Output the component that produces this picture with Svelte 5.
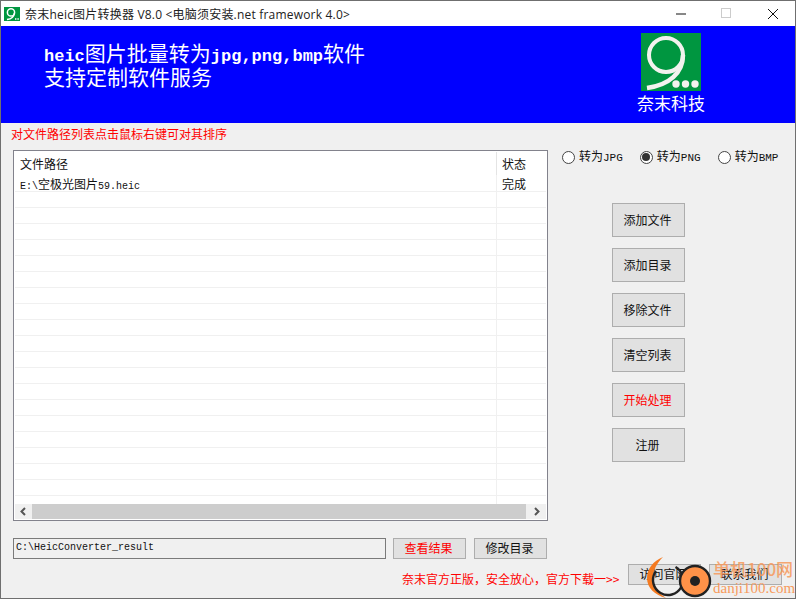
<script>
  const rows = Array.from({ length: 20 }, (_, i) => i);
  const sideButtons = [
    { label: "添加文件" },
    { label: "添加目录" },
    { label: "移除文件" },
    { label: "清空列表" },
    { label: "开始处理", red: true },
    { label: "注册" }
  ];
  const formats = ["JPG", "PNG", "BMP"];
  let format = "PNG";
</script>

<div class="window">
  <header class="titlebar">
    <svg class="app-icon" viewBox="0 0 16 14" width="16" height="14">
      <rect width="16" height="14" fill="#009640" />
      <circle cx="7" cy="5.4" r="3.6" fill="none" stroke="#fff" stroke-width="1.5" />
      <path d="M10.4 6 C10 10 7 12 3 12.6" fill="none" stroke="#fff" stroke-width="1.5" />
      <path d="M11 12h4" stroke="#fff" stroke-width="1.4" stroke-dasharray="1 .6" />
    </svg>
    <span class="title">奈末heic图片转换器 V8.0 &lt;电脑须安装.net framework 4.0&gt;</span>
    <div class="win-controls">
      <svg width="12" height="12" viewBox="0 0 12 12"><path d="M1 6h10" stroke="#111" /></svg>
      <svg width="12" height="12" viewBox="0 0 12 12"><rect x=".5" y=".5" width="9" height="9" fill="none" stroke="#ccc" /></svg>
      <svg width="12" height="12" viewBox="0 0 12 12"><path d="M1 1l10 10M11 1L1 11" stroke="#111" /></svg>
    </div>
  </header>

  <section class="banner">
    <div class="slogan">
      <div><b>heic</b>图片批量转为<b>jpg,png,bmp</b>软件</div>
      <div>支持定制软件服务</div>
    </div>
    <div class="brand">
      <svg viewBox="0 0 60 58" width="60" height="58">
        <rect width="60" height="58" fill="#009640" />
        <circle cx="25" cy="22" r="17" fill="none" stroke="#f2f2ee" stroke-width="4" />
        <path d="M42 22 C42 40 28 52 6 55" fill="none" stroke="#f2f2ee" stroke-width="4.5" />
        <circle cx="35" cy="51" r="3.7" fill="#f2f2ee" />
        <circle cx="44.5" cy="51" r="3.7" fill="#f2f2ee" />
        <circle cx="54" cy="51" r="3.7" fill="#f2f2ee" />
      </svg>
      <span>奈末科技</span>
    </div>
  </section>

  <main class="content">
    <p class="hint">对文件路径列表点击鼠标右键可对其排序</p>

    <div class="workarea">
      <div class="list">
        <div class="list-head">
          <span class="col-path">文件路径</span>
          <span class="col-state">状态</span>
        </div>
        <div class="list-row first">
          <span class="col-path"><span class="mono">E:\</span>空极光图片<span class="mono">59.heic</span></span>
          <span class="col-state">完成</span>
        </div>
        {#each rows as r (r)}
          <div class="list-row">
            <span class="col-path"></span>
            <span class="col-state"></span>
          </div>
        {/each}
        <div class="scrollbar">
          <svg width="17" height="15" viewBox="0 0 17 15"><path d="M10 4L6.5 7.5 10 11" fill="none" stroke="#555" stroke-width="2" /></svg>
          <div class="track"></div>
          <svg width="20" height="15" viewBox="0 0 20 15"><path d="M9 4l3.5 3.5L9 11" fill="none" stroke="#555" stroke-width="2" /></svg>
        </div>
      </div>

      <aside class="side">
        <div class="radios">
          {#each formats as f}
            <label class="radio">
              <span class="dot" class:on={format === f}></span>
              <span>转为<span class="mono wide">{f}</span></span>
            </label>
          {/each}
        </div>
        <div class="actions">
          {#each sideButtons as b}
            <button class="btn" class:red={b.red}>{b.label}</button>
          {/each}
        </div>
      </aside>
    </div>

    <div class="path-row">
      <div class="path-input mono">C:\HeicConverter_result</div>
      <button class="btn red">查看结果</button>
      <button class="btn">修改目录</button>
    </div>

    <div class="foot-row">
      <span class="promo">奈末官方正版，安全放心，官方下载一&gt;&gt;</span>
      <button class="btn small">访问官网</button>
      <button class="btn small">联系我们</button>
    </div>
  </main>

  <div class="watermark">
    <svg width="70" height="42" viewBox="0 0 70 42">
      <path d="M16 0 C6 4 0 12 0 21 C0 31 8 38 19 41 C11 36 6 29 6 21 C6 13 10 6 16 0Z" fill="#f47a20" />
      <circle cx="21" cy="23" r="15" fill="none" stroke="#222" stroke-width="2.4" stroke-dasharray="72 22" transform="rotate(-60 21 23)" />
      <circle cx="48" cy="24" r="15" fill="#ff9248" stroke="#222" stroke-width="2.4" />
      <circle cx="48" cy="24" r="5" fill="#222" />
    </svg>
    <div class="wm-text">
      <span class="wm-cn">单机100网</span>
      <span class="wm-en">danji100.com</span>
    </div>
  </div>
</div>

<style>
  :global(body) {
    margin: 0;
    overflow: hidden;
  }

  .window {
    position: relative;
    width: 796px;
    height: 599px;
    box-sizing: border-box;
    border: 1px solid #6f6f6f;
    background: #f0f0f0;
    font-family: "Noto Sans CJK SC", sans-serif;
    font-size: 12px;
    color: #111;
    overflow: hidden;
  }

  .titlebar {
    display: flex;
    align-items: center;
    height: 25px;
    background: #fff;
    padding-left: 3px;
  }

  .app-icon {
    margin-right: 5px;
  }

  .title {
    font-family: "Open Sans", "Noto Sans CJK SC", sans-serif;
    font-size: 12px;
    letter-spacing: 0.2px;
    color: #222;
    white-space: nowrap;
  }

  .win-controls {
    margin-left: auto;
    display: flex;
    gap: 34px;
    margin-right: 16px;
  }

  .banner {
    display: flex;
    justify-content: space-between;
    height: 97px;
    background: #0000ff;
    color: #fff;
  }

  .slogan {
    padding: 18px 0 0 43px;
    font-family: "Liberation Mono", "Noto Sans CJK SC", monospace;
    font-size: 21px;
    line-height: 23px;
  }

  .slogan b {
    font-size: 17px;
  }

  .brand {
    display: flex;
    flex-direction: column;
    align-items: center;
    width: 70px;
    margin: 7px 89px 0 0;
    font-size: 17px;
    line-height: 24px;
  }

  .content {
    display: flex;
    flex-direction: column;
    padding: 0 0 0 12px;
  }

  .hint {
    margin: 0;
    height: 27px;
    box-sizing: border-box;
    color: #ff0000;
    font-size: 12px;
    line-height: 21px;
    margin-left: -2px;
  }

  .workarea {
    display: flex;
  }

  .list {
    width: 535px;
    height: 371px;
    box-sizing: border-box;
    border: 1px solid #82828c;
    background: #fff;
    display: flex;
    flex-direction: column;
    overflow: hidden;
    position: relative;
    padding: 1px;
  }

  .list-head,
  .list-row {
    display: flex;
    flex: none;
  }

  .list-head {
    height: 23px;
    line-height: 24px;
  }

  .list-row {
    height: 16px;
    line-height: 18px;
    box-sizing: border-box;
    border-bottom: 1px solid #f0f0f0;
  }

  .list-row.first {
    height: 17px;
  }

  .col-path {
    width: 482px;
    padding-left: 5px;
    box-sizing: border-box;
    border-right: 1px solid #f0f0f0;
    white-space: nowrap;
  }

  .list-head .col-path {
    border-right-color: #e4e4e4;
  }

  .col-state {
    padding-left: 5px;
  }

  .mono {
    font-family: "Liberation Mono", "Noto Sans CJK SC", monospace;
    font-size: 10px;
  }

  .mono.wide {
    font-size: 11px;
  }

  .scrollbar {
    position: absolute;
    left: 1px;
    right: 1px;
    bottom: 1px;
    height: 15px;
    display: flex;
    align-items: center;
    background: #f0f0f0;
  }

  .scrollbar svg {
    flex: none;
  }

  .track {
    flex: 1;
    height: 15px;
    background: #cdcdcd;
  }

  .side {
    width: 236px;
  }

  .radios {
    display: flex;
    gap: 17px;
    padding: 0 0 0 14px;
    height: 53px;
  }

  .radio {
    display: flex;
    align-items: center;
    gap: 4px;
    height: 14px;
    font-size: 12px;
    line-height: 14px;
    white-space: nowrap;
  }

  .dot {
    width: 11px;
    height: 11px;
    border: 1px solid #444;
    border-radius: 50%;
    background: #fff;
    position: relative;
    flex: none;
  }

  .dot.on::after {
    content: "";
    position: absolute;
    inset: 1.5px;
    border-radius: 50%;
    background: #333;
  }

  .actions {
    display: flex;
    flex-direction: column;
    gap: 11px;
    padding-left: 64px;
    width: 74px;
  }

  .btn {
    width: 73px;
    height: 34px;
    box-sizing: border-box;
    border: 1px solid #adadad;
    background: #e1e1e1;
    color: #111;
    font-family: inherit;
    font-size: 12px;
    padding: 0 2px 2px 0;
    border-radius: 0;
    flex: none;
  }

  .btn.red {
    color: #ff0000;
  }

  .path-row {
    display: flex;
    align-items: center;
    height: 21px;
    margin-top: 17px;
  }

  .path-row .btn {
    height: 21px;
    margin-left: 8px;
  }

  .path-row .btn:first-of-type {
    margin-left: 7px;
  }

  .path-input {
    width: 373px;
    height: 21px;
    box-sizing: border-box;
    border: 1px solid #7a7a7a;
    padding-left: 2px;
    line-height: 17px;
    white-space: nowrap;
  }

  .foot-row {
    display: flex;
    align-items: center;
    height: 21px;
    margin-top: 5px;
  }

  .promo {
    margin: 8px 0 0 389px;
    width: 226px;
    color: #ff0000;
    font-size: 12px;
    white-space: nowrap;
  }

  .foot-row .btn {
    height: 21px;
    margin-right: 8px;
  }

  /* site stamp laid over the screenshot corner */
  .watermark {
    position: absolute;
    left: 646px;
    bottom: -1px;
    width: 150px;
    height: 42px;
  }

  .watermark svg {
    position: absolute;
    left: 0;
    top: 0;
  }

  .wm-text {
    position: absolute;
    left: 66px;
    top: 1px;
    display: flex;
    flex-direction: column;
    color: #f79a5c;
    white-space: nowrap;
  }

  .wm-cn {
    font-size: 17px;
    line-height: 22px;
    font-weight: 500;
    opacity: 0.85;
  }

  .wm-en {
    font-family: "Liberation Serif", serif;
    font-size: 15px;
    line-height: 17px;
  }
</style>
